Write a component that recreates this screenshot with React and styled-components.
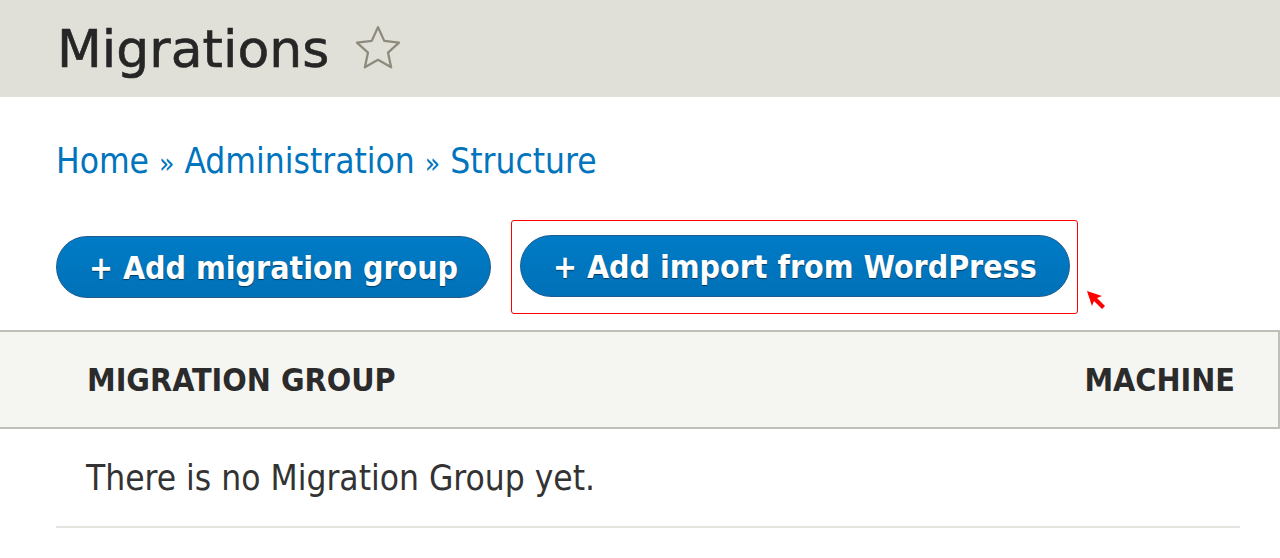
import React from "react";
import styled, { createGlobalStyle } from "styled-components";

const GlobalStyle = createGlobalStyle`
  html, body {
    margin: 0;
    padding: 0;
    background: #fff;
  }
  body {
    font-family: "DejaVu Sans Condensed", "DejaVu Sans", sans-serif;
    color: #333;
  }
`;

const Page = styled.div`
  position: relative;
  width: 1280px;
  height: 558px;
  overflow: hidden;
  background: #fff;
`;

const Header = styled.header`
  height: 97px;
  background-color: #e0e0d8;
  display: flex;
  align-items: center;
  padding-left: 57px;
  box-sizing: border-box;
`;

const Title = styled.h1`
  margin: 0;
  font-family: "DejaVu Sans", sans-serif;
  font-size: 52px;
  font-weight: normal;
  color: #262626;
  -webkit-text-stroke: 0.6px #262626;
  display: flex;
  align-items: center;
  gap: 23px;
`;

const Star = styled.svg`
  width: 52px;
  height: 50px;
`;

const Content = styled.div`
  padding: 0 56px;
`;

const Breadcrumb = styled.nav`
  padding-top: 42px;
  font-size: 35px;
  line-height: 44px;
  color: #0074bd;
`;

const Crumb = styled.a`
  color: #0074bd;
  text-decoration: none;
`;

const Sep = styled.span`
  font-size: 28px;
  color: #0074bd;
  margin: 0 10px;
`;

const Actions = styled.div`
  display: flex;
  align-items: center;
  gap: 20px;
  margin-top: 34px;
`;

const Highlight = styled.div`
  border: 1px solid #ff0000;
  border-radius: 3px;
  padding: 14px 7px 16px 8px;
`;

const Button = styled.a`
  display: inline-flex;
  align-items: center;
  justify-content: center;
  height: 62px;
  box-sizing: border-box;
  padding: 0 32px;
  border-radius: 31px;
  border: 1px solid #1e5c90;
  background: linear-gradient(to bottom, #007bc6, #0071b8);
  color: #fff;
  font-size: 31.8px;
  font-weight: bold;
  text-shadow: 0 1px 1px rgba(0, 0, 0, 0.5);
  white-space: nowrap;
  cursor: pointer;
`;

const Cursor = styled.svg`
  position: absolute;
  left: 1086px;
  top: 290px;
  width: 22px;
  height: 20px;
`;

const TableHead = styled.div`
  margin-top: 16px;
  height: 99px;
  box-sizing: border-box;
  display: flex;
  align-items: center;
  justify-content: space-between;
  padding: 0 43px 0 87px;
  background: #f5f5f2;
  border-top: 2px solid #c0bfb9;
  border-bottom: 2px solid #c0bfb9;
  border-right: 2px solid #c0bfb9;
  font-size: 32px;
  font-weight: bold;
  text-transform: uppercase;
  color: #2b2b2b;
`;

const EmptyRow = styled.div`
  margin: 0 40px 0 56px;
  height: 99px;
  box-sizing: border-box;
  display: flex;
  align-items: center;
  padding-left: 30px;
  border-bottom: 2px solid #e6e4df;
  font-size: 35px;
  color: #333;
`;

export default function App() {
  return (
    <Page>
      <GlobalStyle />
      <Header>
        <Title>
          Migrations
          <Star viewBox="0 0 24 24" fill="none" stroke="#8e8b7d" strokeWidth="1.1" strokeLinejoin="round">
            <path d="M12 1.5l3 6.6 7.1.8-5.3 4.8 1.5 7.1L12 17.2l-6.3 3.6 1.5-7.1-5.3-4.8 7.1-.8z" />
          </Star>
        </Title>
      </Header>
      <Content>
        <Breadcrumb>
          <Crumb>Home</Crumb>
          <Sep>»</Sep>
          <Crumb>Administration</Crumb>
          <Sep>»</Sep>
          <Crumb>Structure</Crumb>
        </Breadcrumb>
        <Actions>
          <Button>+ Add migration group</Button>
          <Highlight>
            <Button>+ Add import from WordPress</Button>
          </Highlight>
        </Actions>
      </Content>
      <Cursor viewBox="0 0 22 20">
        <path d="M1 1l15 5-5 2 8 8-3 3-8-8-2 5z" fill="#ff0000" />
      </Cursor>
      <TableHead>
        <span>Migration group</span>
        <span>Machine</span>
      </TableHead>
      <EmptyRow>There is no Migration Group yet.</EmptyRow>
    </Page>
  );
}
